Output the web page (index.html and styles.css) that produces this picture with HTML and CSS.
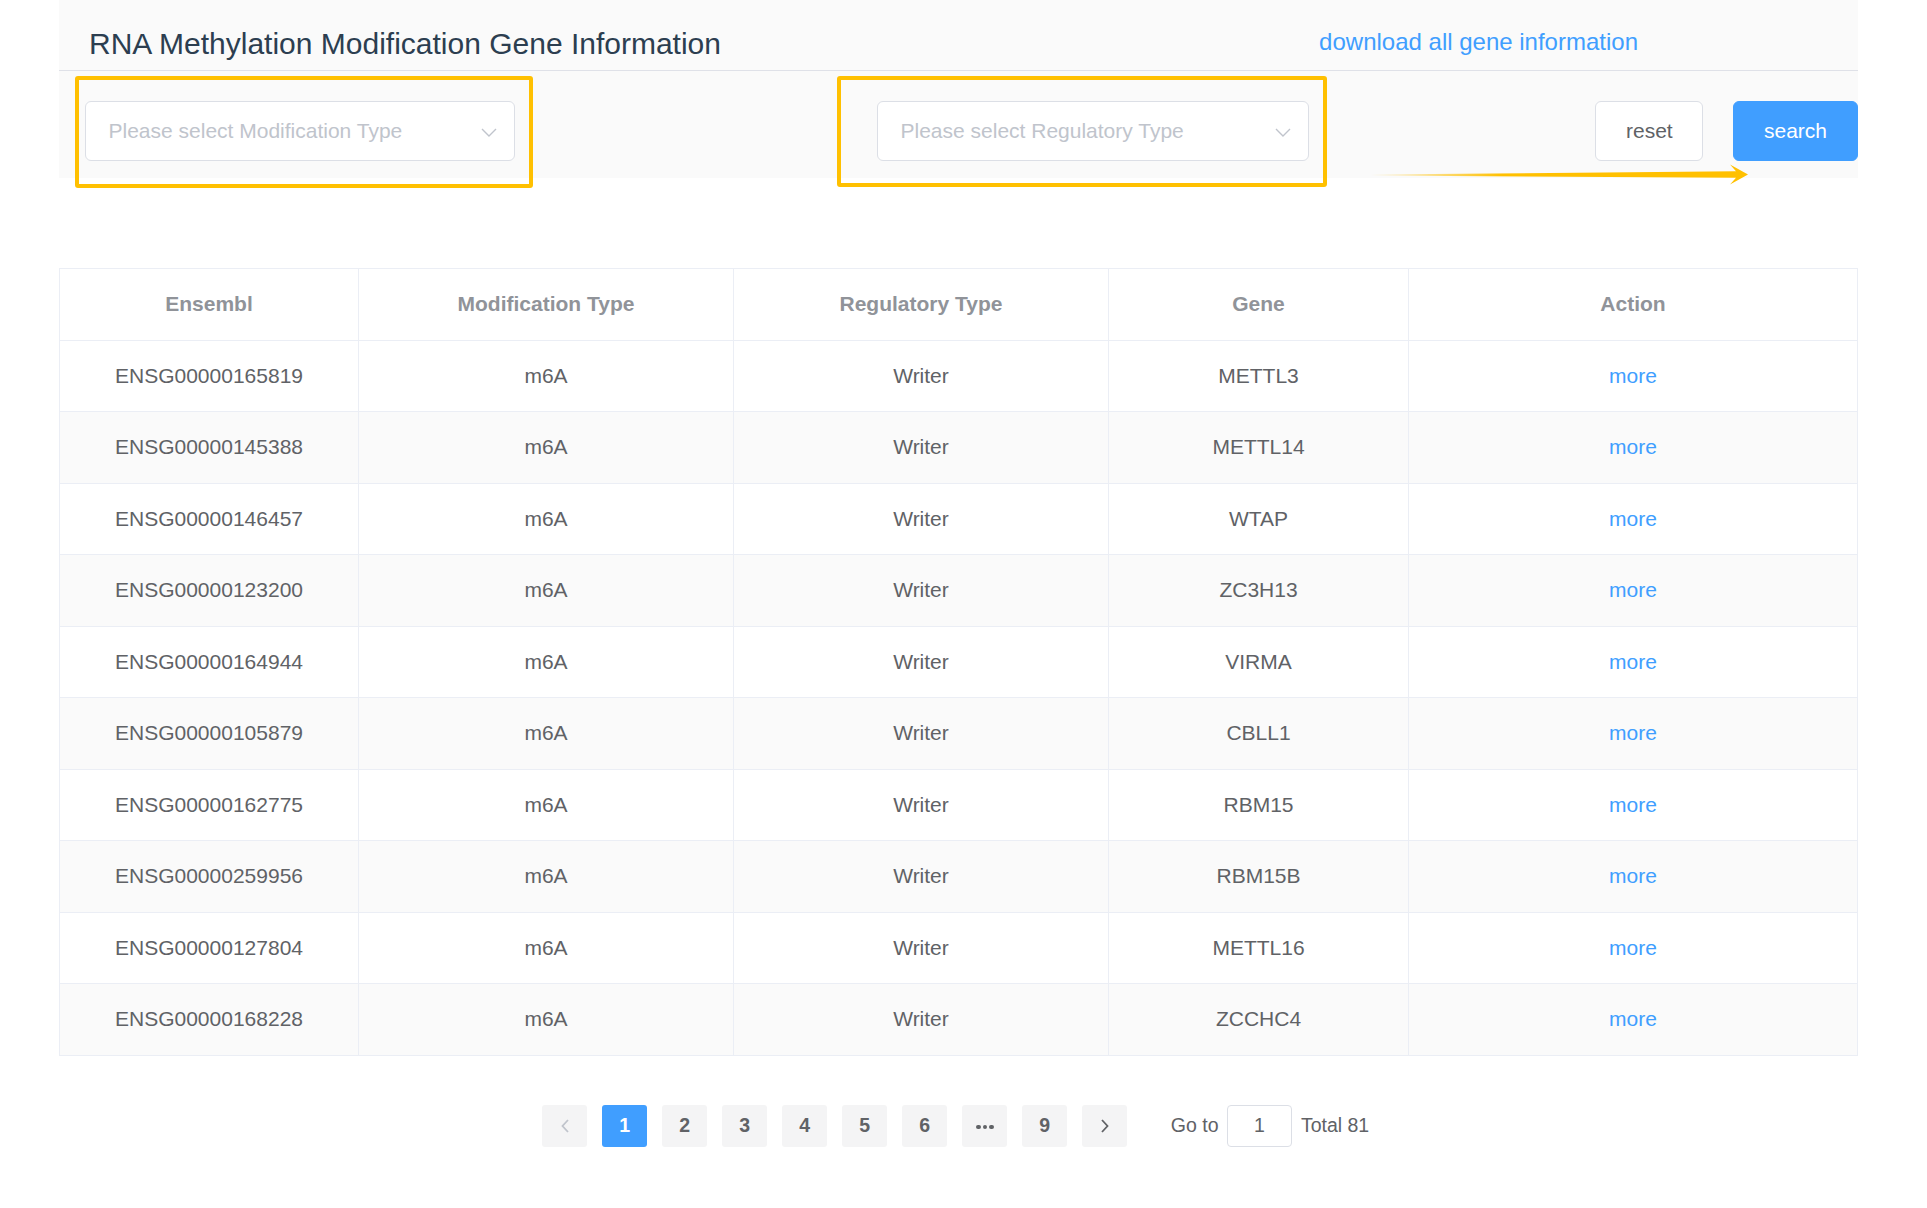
FILE: index.html
```html
<!DOCTYPE html>
<html lang="en">
<head>
<meta charset="utf-8">
<title>RNA Methylation Modification Gene Information</title>
<link rel="stylesheet" href="styles.css">
</head>
<body>
<div class="page">
  <div class="panel">
    <div class="head">
      <h1 class="title">RNA Methylation Modification Gene Information</h1>
      <a class="download" href="#">download all gene information</a>
    </div>
    <div class="filters">
      <div class="select sel-mod">
        <span class="placeholder">Please select Modification Type</span>
        <svg class="chev" width="16" height="9" viewBox="0 0 16 9"><path d="M1 1 L8 8 L15 1" fill="none" stroke="#c0c4cc" stroke-width="1.4"/></svg>
      </div>
      <div class="select sel-reg">
        <span class="placeholder">Please select Regulatory Type</span>
        <svg class="chev" width="16" height="9" viewBox="0 0 16 9"><path d="M1 1 L8 8 L15 1" fill="none" stroke="#c0c4cc" stroke-width="1.4"/></svg>
      </div>
      <div class="buttons">
        <button class="btn btn-reset">reset</button>
        <button class="btn btn-search">search</button>
      </div>
      <div class="mark mark-1"></div>
      <div class="mark mark-2"></div>
      <svg class="arrow" width="380" height="22" viewBox="0 0 380 22">
        <defs>
          <linearGradient id="ag" x1="0" y1="0" x2="1" y2="0">
            <stop offset="0" stop-color="#ffc000" stop-opacity="0"/>
            <stop offset="0.35" stop-color="#ffc000" stop-opacity="1"/>
            <stop offset="1" stop-color="#ffc000" stop-opacity="1"/>
          </linearGradient>
        </defs>
        <polygon points="0,10.6 366,7.2 360,0.5 378,10.5 360,20.5 366,13.8 0,11.6" fill="url(#ag)"/>
      </svg>
    </div>
  </div>

  <div class="table">
    <div class="row hrow">
      <div class="cell">Ensembl</div>
      <div class="cell">Modification Type</div>
      <div class="cell">Regulatory Type</div>
      <div class="cell">Gene</div>
      <div class="cell">Action</div>
    </div>
    <div class="row"><div class="cell">ENSG00000165819</div><div class="cell">m6A</div><div class="cell">Writer</div><div class="cell">METTL3</div><div class="cell"><a class="more" href="#">more</a></div></div>
    <div class="row stripe"><div class="cell">ENSG00000145388</div><div class="cell">m6A</div><div class="cell">Writer</div><div class="cell">METTL14</div><div class="cell"><a class="more" href="#">more</a></div></div>
    <div class="row"><div class="cell">ENSG00000146457</div><div class="cell">m6A</div><div class="cell">Writer</div><div class="cell">WTAP</div><div class="cell"><a class="more" href="#">more</a></div></div>
    <div class="row stripe"><div class="cell">ENSG00000123200</div><div class="cell">m6A</div><div class="cell">Writer</div><div class="cell">ZC3H13</div><div class="cell"><a class="more" href="#">more</a></div></div>
    <div class="row"><div class="cell">ENSG00000164944</div><div class="cell">m6A</div><div class="cell">Writer</div><div class="cell">VIRMA</div><div class="cell"><a class="more" href="#">more</a></div></div>
    <div class="row stripe"><div class="cell">ENSG00000105879</div><div class="cell">m6A</div><div class="cell">Writer</div><div class="cell">CBLL1</div><div class="cell"><a class="more" href="#">more</a></div></div>
    <div class="row"><div class="cell">ENSG00000162775</div><div class="cell">m6A</div><div class="cell">Writer</div><div class="cell">RBM15</div><div class="cell"><a class="more" href="#">more</a></div></div>
    <div class="row stripe"><div class="cell">ENSG00000259956</div><div class="cell">m6A</div><div class="cell">Writer</div><div class="cell">RBM15B</div><div class="cell"><a class="more" href="#">more</a></div></div>
    <div class="row"><div class="cell">ENSG00000127804</div><div class="cell">m6A</div><div class="cell">Writer</div><div class="cell">METTL16</div><div class="cell"><a class="more" href="#">more</a></div></div>
    <div class="row stripe"><div class="cell">ENSG00000168228</div><div class="cell">m6A</div><div class="cell">Writer</div><div class="cell">ZCCHC4</div><div class="cell"><a class="more" href="#">more</a></div></div>
  </div>

  <div class="pagination">
    <button class="pg pg-prev" aria-label="previous">
      <svg width="10" height="14" viewBox="0 0 10 14"><path d="M8 1 L2.5 7 L8 13" fill="none" stroke="#c0c4cc" stroke-width="1.8"/></svg>
    </button>
    <button class="pg active">1</button>
    <button class="pg">2</button>
    <button class="pg">3</button>
    <button class="pg">4</button>
    <button class="pg">5</button>
    <button class="pg">6</button>
    <button class="pg pg-more"><span class="dot"></span><span class="dot"></span><span class="dot"></span></button>
    <button class="pg">9</button>
    <button class="pg pg-next" aria-label="next">
      <svg width="10" height="14" viewBox="0 0 10 14"><path d="M2 1 L7.5 7 L2 13" fill="none" stroke="#606266" stroke-width="1.8"/></svg>
    </button>
    <span class="jump">Go to <span class="jump-input">1</span></span>
    <span class="total">Total 81</span>
  </div>
</div>
</body>
</html>
```

FILE: styles.css
```css
* { box-sizing: border-box; }

html, body {
  margin: 0;
  padding: 0;
  background: #ffffff;
  font-family: "Liberation Sans", Arial, Helvetica, sans-serif;
}

.page {
  margin-left: 59px;
  width: 1799px;
}

.panel {
  background: #fafafa;
}

.head {
  display: flex;
  align-items: flex-start;
  height: 71px;
  border-bottom: 1px solid #dfe1e8;
}

.title {
  margin: 0;
  padding: 27px 0 0 30px;
  font-size: 30px;
  line-height: 34px;
  font-weight: normal;
  color: #2c3e50;
}

.download {
  margin-left: auto;
  margin-right: 220px;
  padding-top: 28px;
  font-size: 24px;
  line-height: 28px;
  color: #409eff;
  text-decoration: none;
}

.filters {
  position: relative;
  display: flex;
  align-items: flex-start;
  height: 107px;
  padding: 30px 0 0 26px;
}

.select {
  position: relative;
  display: flex;
  align-items: center;
  height: 60px;
  padding: 0 45px 0 22.5px;
  background: #ffffff;
  border: 1px solid #dcdfe6;
  border-radius: 6px;
}

.sel-mod { width: 430px; }
.sel-reg { width: 432px; margin-left: 362px; }

.placeholder {
  font-size: 21px;
  color: #c0c4cc;
  white-space: nowrap;
}

.chev {
  position: absolute;
  right: 17px;
  top: 26px;
}

.buttons {
  margin-left: auto;
  display: flex;
  gap: 30px;
}

.btn {
  height: 60px;
  padding: 0 30px;
  font-family: "Liberation Sans", Arial, Helvetica, sans-serif;
  font-size: 21px;
  border-radius: 6px;
  border: 1px solid #dcdfe6;
  background: #ffffff;
  color: #606266;
  cursor: pointer;
}

.btn-reset { width: 108px; }

.btn-search {
  width: 125px;
  background: #409eff;
  border-color: #409eff;
  color: #ffffff;
}

.mark {
  position: absolute;
  border: 4px solid #ffc000;
  border-radius: 3px;
}

.mark-1 { left: 16px; top: 5px; width: 458px; height: 112px; }
.mark-2 { left: 778px; top: 5px; width: 490px; height: 111px; }

.arrow {
  position: absolute;
  left: 1311px;
  top: 93px;
}

.table {
  margin-top: 90px;
  border-top: 1px solid #ebeef5;
  border-left: 1px solid #ebeef5;
  border-right: 1px solid #ebeef5;
}

.row {
  display: grid;
  grid-template-columns: 299px 375px 375px 300px 1fr;
  height: 71.5px;
  border-bottom: 1px solid #ebeef5;
  background: #ffffff;
}

.row.stripe { background: #fafafa; }

.cell {
  display: flex;
  align-items: center;
  justify-content: center;
  font-size: 21px;
  color: #606266;
  border-right: 1px solid #ebeef5;
}

.cell:last-child { border-right: none; }

.hrow .cell {
  font-weight: bold;
  color: #909399;
}

.more {
  color: #409eff;
  text-decoration: none;
}

.pagination {
  display: flex;
  align-items: center;
  justify-content: center;
  margin-top: 49px;
  padding-left: 2px;
  padding-right: 15px;
  color: #606266;
}

.pg {
  width: 45px;
  height: 42px;
  margin: 0 7.5px;
  padding: 0;
  border: none;
  border-radius: 3px;
  background: #f4f4f5;
  color: #606266;
  font-family: "Liberation Sans", Arial, Helvetica, sans-serif;
  font-size: 19.5px;
  font-weight: bold;
  display: flex;
  align-items: center;
  justify-content: center;
  cursor: pointer;
}

.pg.active {
  background: #409eff;
  color: #ffffff;
}

.pg-more { gap: 2px; padding-top: 3px; }

.dot {
  width: 4.5px;
  height: 4.5px;
  border-radius: 50%;
  background: #606266;
}

.jump {
  margin-left: 36px;
  font-size: 19.5px;
  color: #606266;
  display: flex;
  align-items: center;
  white-space: pre;
}

.jump-input {
  display: flex;
  align-items: center;
  justify-content: center;
  width: 65px;
  height: 42px;
  margin: 0 3px;
  border: 1px solid #dcdfe6;
  border-radius: 4px;
  background: #ffffff;
  font-size: 19.5px;
  color: #606266;
}

.total {
  margin-left: 6px;
  font-size: 19.5px;
  color: #606266;
}
```
